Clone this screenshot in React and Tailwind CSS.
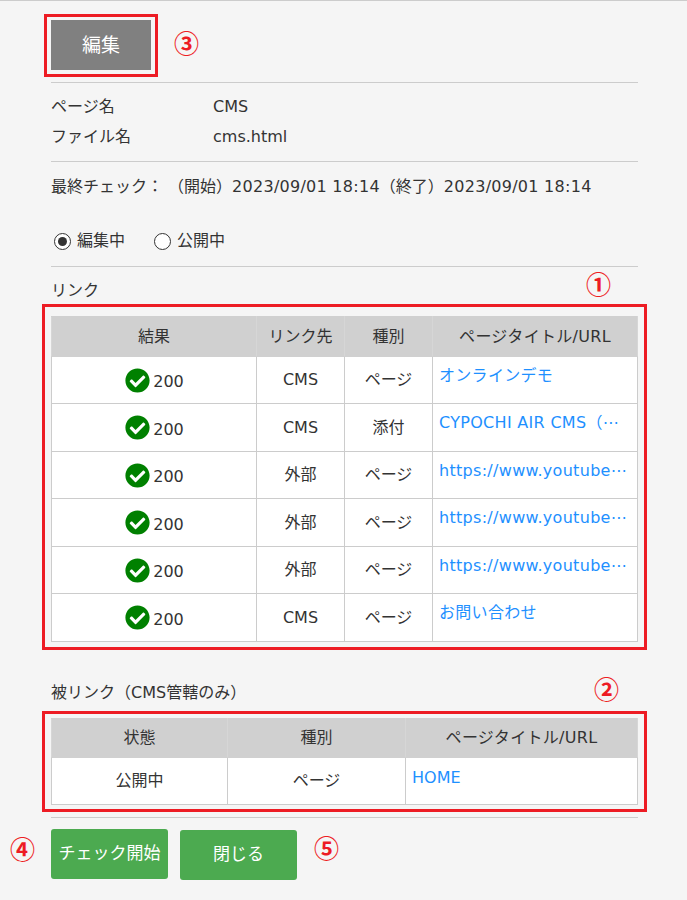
import { FaCheckCircle } from 'react-icons/fa';

const links = [
  { to: 'CMS', kind: 'ページ', title: 'オンラインデモ' },
  { to: 'CMS', kind: '添付', title: 'CYPOCHI AIR CMS（⋯' },
  { to: '外部', kind: 'ページ', title: 'https://www.youtube⋯' },
  { to: '外部', kind: 'ページ', title: 'https://www.youtube⋯' },
  { to: '外部', kind: 'ページ', title: 'https://www.youtube⋯' },
  { to: 'CMS', kind: 'ページ', title: 'お問い合わせ' },
];

const th = 'border border-[#d6d6d6] border-t-[#d0d0d0] border-b-[#d0d0d0] bg-[#d0d0d0] font-normal text-center p-0';
const td = 'border border-[#ccc] text-center align-middle p-0';

function Mark({ children, className = '' }) {
  return <span className={`text-[25px] leading-[24px] text-[#ed1c24] font-bold font-['Noto_Sans_CJK_JP',sans-serif] ${className}`}>{children}</span>;
}

function Radio({ checked, label }) {
  return (
    <label className="flex items-center gap-[6px]">
      <span className="w-[17px] h-[17px] rounded-full border border-[#333] bg-white flex items-center justify-center">
        {checked && <span className="w-[9px] h-[9px] rounded-full bg-[#333]" />}
      </span>
      {label}
    </label>
  );
}

export default function App() {
  return (
    <div className="relative h-[900px] overflow-hidden bg-[#f5f5f5] border-t border-[#ccc] pl-[51px] pr-[49px] text-[16px] text-[#333] [text-spacing-trim:space-all] font-['DejaVu_Sans','Noto_Sans_CJK_JP',sans-serif]">
      <div className="flex items-center mt-[13px] h-[63px]">
        <div className="-ml-[7px] border-[3px] border-[#ed1c24] pl-[4px] pr-[4px] pt-[3px] pb-[4px]">
          <button className="block w-[100px] h-[50px] bg-[#808080] text-white text-[19px]">編集</button>
        </div>
        <Mark className="ml-[16px] -mt-[8px]">③</Mark>
      </div>

      <div className="mt-[5px] border-t border-[#ccc] pt-[9px] pb-[9px]">
        <div className="flex h-[30px] items-center"><span className="w-[162px]">ページ名</span><span>CMS</span></div>
        <div className="flex h-[30px] items-center"><span className="w-[162px]">ファイル名</span><span>cms.html</span></div>
      </div>

      <div className="border-t border-[#ccc] pt-[10px] h-[105px]">
        <div className="h-[30px] flex items-center whitespace-pre">
          最終チェック： （開始）<span className="tracking-[0.27px]">2023/09/01 18:14</span>（終了）<span className="tracking-[0.27px]">2023/09/01 18:14</span>
        </div>
        <div className="mt-[24px] ml-[3px] flex items-center gap-[29px] h-[30px]">
          <Radio checked label="編集中" />
          <Radio label="公開中" />
        </div>
      </div>

      <div className="border-t border-[#ccc] h-[38px] flex items-center justify-between pt-[10px]">
        <span>リンク</span>
        <Mark className="mr-[27px] -mt-[16px]">①</Mark>
      </div>

      <div className="-mx-[9px] border-[3px] border-[#ed1c24] px-[6px] pt-[9px] pb-[5px]">
        <table className="w-full table-fixed border-collapse">
          <thead>
            <tr className="h-[40px]">
              <th className={`${th} w-[205px]`}>結果</th>
              <th className={`${th} w-[88px]`}>リンク先</th>
              <th className={`${th} w-[88px]`}>種別</th>
              <th className={`${th} tracking-[0.3px]`}>ページタイトル/URL</th>
            </tr>
          </thead>
          <tbody>
            {links.map((r, i) => (
              <tr key={i} className="odd:h-[47px] even:h-[48px] bg-white">
                <td className={td}>
                  <span className="inline-flex items-center gap-[4px] align-middle">
                    <FaCheckCircle className="text-[#008000] text-[25px] translate-x-[1px]" />
                    <span className="translate-y-[2px]">200</span>
                  </span>
                </td>
                <td className={td}>{r.to}</td>
                <td className={td}>{r.kind}</td>
                <td className="border border-[#ccc] align-top p-0 pl-[6px] pr-[8px] pt-[7px]">
                  <a className="block whitespace-nowrap tracking-[0.3px] text-[#1e90ff]">{r.title}</a>
                </td>
              </tr>
            ))}
          </tbody>
        </table>
      </div>

      <div className="h-[61px] flex items-center justify-between pt-[24px]">
        <span>被リンク（CMS管轄のみ）</span>
        <Mark className="mr-[19px] -mt-[10px]">②</Mark>
      </div>

      <div className="-mx-[9px] border-[3px] border-[#ed1c24] px-[6px] pt-[4px] pb-[4px]">
        <table className="w-full table-fixed border-collapse">
          <thead>
            <tr className="h-[39px]">
              <th className={`${th} w-[176px]`}>状態</th>
              <th className={`${th} w-[178px]`}>種別</th>
              <th className={`${th} tracking-[0.3px]`}>ページタイトル/URL</th>
            </tr>
          </thead>
          <tbody>
            <tr className="h-[47px] bg-white">
              <td className={td}>公開中</td>
              <td className={td}>ページ</td>
              <td className="border border-[#ccc] align-top p-0 pl-[6px] pt-[8px]">
                <a className="block truncate text-[#1e90ff]">HOME</a>
              </td>
            </tr>
          </tbody>
        </table>
      </div>

      <div className="mt-[5px] border-t border-[#ccc] pt-[11px] flex items-start">
        <button className="w-[117px] h-[50px] rounded-[3px] bg-[#4caa50] text-white text-[17px]">チェック開始</button>
        <button className="ml-[12px] mt-[1px] w-[117px] h-[50px] rounded-[3px] bg-[#4caa50] text-white text-[17px]">閉じる</button>
        <Mark className="ml-[17px] mt-[6px]">⑤</Mark>
      </div>
      <Mark className="absolute left-[10px] top-[835px]">④</Mark>
    </div>
  );
}
